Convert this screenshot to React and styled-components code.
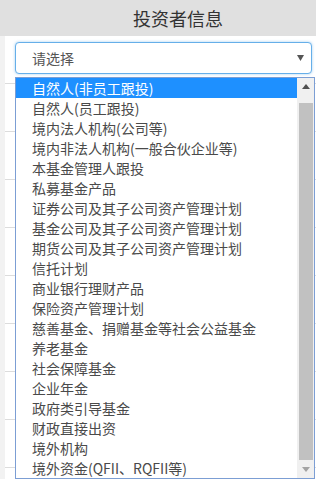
import React from 'react'
import styled, { createGlobalStyle } from 'styled-components'

const GlobalStyle = createGlobalStyle`
  html, body {
    margin: 0;
    padding: 0;
    background: #fff;
    font-family: "Noto Sans CJK SC", "Noto Sans", sans-serif;
  }
`

const options = [
  '自然人(非员工跟投)',
  '自然人(员工跟投)',
  '境内法人机构(公司等)',
  '境内非法人机构(一般合伙企业等)',
  '本基金管理人跟投',
  '私募基金产品',
  '证券公司及其子公司资产管理计划',
  '基金公司及其子公司资产管理计划',
  '期货公司及其子公司资产管理计划',
  '信托计划',
  '商业银行理财产品',
  '保险资产管理计划',
  '慈善基金、捐赠基金等社会公益基金',
  '养老基金',
  '社会保障基金',
  '企业年金',
  '政府类引导基金',
  '财政直接出资',
  '境外机构',
  '境外资金(QFII、RQFII等)',
]

const Page = styled.div`
  width: 316px;
  height: 479px;
  overflow: hidden;
  position: relative;
`

const Header = styled.div`
  height: 36px;
  background: #e0e0e0;
  display: flex;
  align-items: center;
  justify-content: center;
  padding-left: 40px;
  font-size: 18px;
  color: #333;
`

const Body = styled.div`
  position: relative;
  border-left: 5px solid #f2f2f2;
`

const Row = styled.div`
  height: 47px;
  border-bottom: 1px solid #dcdcdc;
`

const SelectBox = styled.div`
  position: absolute;
  top: 6px;
  left: 10px;
  width: 297px;
  height: 32px;
  border: 1px solid #66afe9;
  border-radius: 4px;
  box-shadow: 0 0 3px rgba(102, 175, 233, 0.6);
  background: #fff;
  display: flex;
  align-items: center;
  justify-content: space-between;
  padding: 0 7px 0 16px;
  box-sizing: border-box;
  font-size: 14px;
  color: #555;
`

const Dropdown = styled.div`
  position: absolute;
  top: 41px;
  left: 10px;
  width: 300px;
  height: 402px;
  box-sizing: border-box;
  border: 1px solid #7c9ed4;
  background: #fff;
  display: flex;
`

const List = styled.div`
  flex: 1;
  display: flex;
  flex-direction: column;
`

const Option = styled.div`
  height: 20px;
  line-height: 20px;
  padding-left: 16px;
  font-size: 14px;
  white-space: nowrap;
  overflow: hidden;
  color: ${p => (p.$active ? '#fff' : '#4a4a4a')};
  background: ${p => (p.$active ? '#1e90ff' : 'transparent')};
`

const Scrollbar = styled.div`
  width: 17px;
  background: #f0f0f0;
  display: flex;
  flex-direction: column;
  align-items: center;
`

const ArrowButton = styled.div`
  height: 17px;
  width: 17px;
  display: flex;
  align-items: center;
  justify-content: center;
`

const Thumb = styled.div`
  width: 14px;
  flex: 1;
  margin: 8px 0 1px;
  background: #c1c1c1;
`

const Arrow = ({ up, color, w = 8, h = 5 }) => (
  <svg width={w} height={h} viewBox={`0 0 ${w} ${h}`}>
    <polygon points={up ? `0,${h} ${w},${h} ${w / 2},0` : `0,0 ${w},0 ${w / 2},${h}`} fill={color} />
  </svg>
)

const App = () => {
  return (
    <Page>
      <GlobalStyle />
      <Header>投资者信息</Header>
      <Body>
        {Array.from({ length: 10 }).map((_, i) => (
          <Row key={i} />
        ))}
        <SelectBox>
          请选择
          <Arrow color="#555" w={7} h={6} />
        </SelectBox>
        <Dropdown>
          <List>
            {options.map((o, i) => (
              <Option key={o} $active={i === 0}>
                {o}
              </Option>
            ))}
          </List>
          <Scrollbar>
            <ArrowButton>
              <Arrow up color="#505050" />
            </ArrowButton>
            <Thumb />
            <ArrowButton>
              <Arrow color="#a3a3a3" />
            </ArrowButton>
          </Scrollbar>
        </Dropdown>
      </Body>
    </Page>
  )
}

export default App
